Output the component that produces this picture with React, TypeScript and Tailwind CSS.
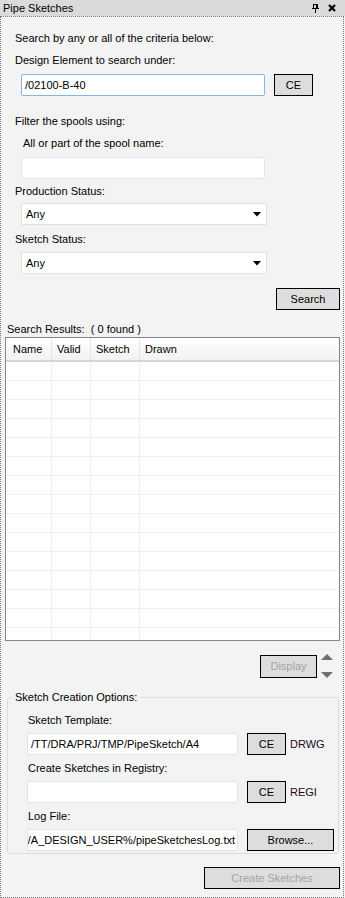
import type { ReactNode } from 'react';

const font = { fontFamily: '"Liberation Sans", Arial, sans-serif' };

function Label({ children, className = '' }: { children: ReactNode; className?: string }) {
  return <div className={`h-[14px] leading-[14px] text-[11px] text-black whitespace-nowrap ${className}`}>{children}</div>;
}

function TextBox({ value = '', width, focused = false, scrolled = false }: { value?: string; width: string; focused?: boolean; scrolled?: boolean }) {
  return (
    <div
      className={`${width} h-[22px] bg-white border rounded-[2px] flex items-center overflow-hidden text-[11px] text-black whitespace-nowrap ${
        scrolled ? 'justify-end pr-[2px]' : 'pl-[3px]'
      } ${focused ? 'border-[#86b5e0]' : 'border-[#dde4ea]'}`}
    >
      <span className="shrink-0">{value}</span>
    </div>
  );
}

function Btn({ children, width, disabled = false, className = '' }: { children: ReactNode; width: string; disabled?: boolean; className?: string }) {
  return (
    <div
      className={`${width} h-[22px] bg-[#dddddd] border border-black flex items-center justify-center text-[11px] ${
        disabled ? 'text-[#a3a3a3]' : 'text-black'
      } ${className}`}
    >
      {children}
    </div>
  );
}

function Combo({ value }: { value: string }) {
  return (
    <div className="ml-[20px] w-[246px] h-[22px] bg-white border border-[#e1e1e1] flex items-center justify-between pl-[4px] pr-[5px] text-[11px] text-black">
      <span>{value}</span>
      <svg width="8" height="5" viewBox="0 0 8 5">
        <path d="M0 0 H8 L4 4.5 Z" fill="#000" />
      </svg>
    </div>
  );
}

const cols = ['w-[46px]', 'w-[39px]', 'w-[49px]', 'flex-1'];

export default function App() {
  const rows = Array.from({ length: 15 });
  return (
    <div className="w-[345px] h-[898px] bg-[#f3f3f3] flex flex-col" style={font}>
      {/* title */}
      <div className="h-[16px] bg-[#dadada] flex items-center justify-between pl-[3px] pr-[9px]">
        <span className="text-[11px] leading-[14px] text-black">Pipe Sketches</span>
        <div className="flex items-center gap-[9px]">
          <svg width="7" height="9" viewBox="0 0 7 9">
            <rect x="1.5" y="0.5" width="4" height="4" fill="none" stroke="#000" />
            <rect x="0" y="4" width="7" height="1" fill="#000" />
            <rect x="3" y="5" width="1" height="4" fill="#000" />
            <rect x="4" y="0.5" width="1.5" height="4" fill="#000" />
          </svg>
          <svg width="8" height="8" viewBox="0 0 8 8">
            <path d="M1 1 L7 7 M7 1 L1 7" stroke="#000" strokeWidth="2.2" />
          </svg>
        </div>
      </div>

      {/* panel */}
      <div className="h-[882px] w-[344px] border border-dotted border-[#7a7a7a] flex flex-col">
        <Label className="mt-[14px] ml-[14px]">Search by any or all of the criteria below:</Label>
        <Label className="mt-[8px] ml-[14px]">Design Element to search under:</Label>
        <div className="mt-[7px] ml-[20px] flex gap-[9px]">
          <TextBox value="/02100-B-40" width="w-[244px]" focused />
          <Btn width="w-[39px]">CE</Btn>
        </div>

        <Label className="mt-[18px] ml-[14px]">Filter the spools using:</Label>
        <Label className="mt-[8px] ml-[22px]">All or part of the spool name:</Label>
        <div className="mt-[7px] ml-[20px]">
          <TextBox width="w-[244px]" />
        </div>
        <Label className="mt-[5px] ml-[14px]">Production Status:</Label>
        <div className="mt-[5px]">
          <Combo value="Any" />
        </div>
        <Label className="mt-[7px] ml-[14px]">Sketch Status:</Label>
        <div className="mt-[6px]">
          <Combo value="Any" />
        </div>
        <div className="mt-[14px] ml-[275px]">
          <Btn width="w-[64px]">Search</Btn>
        </div>

        <Label className="mt-[12px] ml-[6px]">Search Results:&nbsp; ( 0 found )</Label>
        {/* results table */}
        <div className="mt-[1px] ml-[4px] w-[335px] h-[304px] border border-[#828790] bg-white overflow-hidden flex flex-col">
          <div className="h-[24px] shrink-0 flex bg-gradient-to-b from-white to-[#f2f2f2] border-b-2 border-[#d5d5d5] text-[11px] text-black">
            {['Name', 'Valid', 'Sketch', 'Drawn'].map((h, i) => (
              <div
                key={h}
                className={`${cols[i]} h-full flex items-center ${i === 0 ? 'pl-[7px]' : 'pl-[5px]'} ${i < 3 ? 'border-r border-[#e5e5e5]' : ''}`}
              >
                {h}
              </div>
            ))}
          </div>
          {rows.map((_, r) => (
            <div key={r} className="h-[19px] shrink-0 flex border-b border-[#efefef]">
              {cols.map((c, i) => (
                <div key={i} className={`${c} h-full ${i < 3 ? 'border-r border-[#efefef]' : ''}`} />
              ))}
            </div>
          ))}
        </div>

        <div className="mt-[12px] h-[26px] ml-[259px] flex items-center gap-[4px]">
          <Btn width="w-[57px]" disabled className="h-[23px]">
            Display
          </Btn>
          <div className="flex flex-col justify-between h-[26px] py-[1px]">
            <svg width="12" height="6" viewBox="0 0 12 6">
              <path d="M0 6 L6 0 L12 6 Z" fill="#6f6f6f" />
            </svg>
            <svg width="12" height="6" viewBox="0 0 12 6">
              <path d="M0 0 L12 0 L6 6 Z" fill="#6f6f6f" />
            </svg>
          </div>
        </div>

        {/* sketch creation options */}
        <fieldset className="mt-[11px] ml-[6px] w-[332px] border border-[#d5dfe5] rounded-[3px] pb-[2px]">
          <legend className="ml-[4px] px-[3px] text-[11px] leading-[14px] text-black">Sketch Creation Options:</legend>
          <Label className="mt-[9px] ml-[20px]">Sketch Template:</Label>
          <div className="mt-[6px] ml-[19px] flex items-center">
            <TextBox value="/TT/DRA/PRJ/TMP/PipeSketch/A4" width="w-[211px]" />
            <Btn width="w-[39px]" className="ml-[9px]">CE</Btn>
            <span className="ml-[4px] text-[11px] text-[#1c0a1c]">DRWG</span>
          </div>
          <Label className="mt-[6px] ml-[20px]">Create Sketches in Registry:</Label>
          <div className="mt-[6px] ml-[19px] flex items-center">
            <TextBox width="w-[211px]" />
            <Btn width="w-[39px]" className="ml-[9px]">CE</Btn>
            <span className="ml-[4px] text-[11px] text-[#1c0a1c]">REGI</span>
          </div>
          <Label className="mt-[6px] ml-[20px]">Log File:</Label>
          <div className="mt-[6px] ml-[19px] flex items-center">
            <TextBox value="/A_DESIGN_USER%/pipeSketchesLog.txt" width="w-[211px]" scrolled />
            <Btn width="w-[87px]" className="ml-[9px]">Browse...</Btn>
          </div>
        </fieldset>

        <div className="mt-[13px] ml-[203px]">
          <Btn width="w-[136px]" disabled>
            Create Sketches
          </Btn>
        </div>
      </div>
    </div>
  );
}
